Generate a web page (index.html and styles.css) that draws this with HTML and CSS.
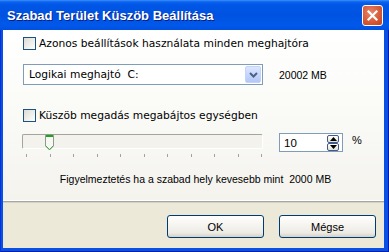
FILE: index.html
```html
<!DOCTYPE html>
<html>
<head>
<meta charset="utf-8">
<link rel="stylesheet" href="styles.css">
</head>
<body>
<div class="window">
  <div class="titlebar">
    <span class="title">Szabad Terület Küszöb Beállítása</span>
    <div class="close">
      <svg width="13" height="13" viewBox="0 0 13 13"><path d="M2.5 2.5 L10.5 10.5 M10.5 2.5 L2.5 10.5" stroke="#fff" stroke-width="2.2" stroke-linecap="square"/></svg>
    </div>
  </div>
  <div class="frame">
    <div class="client">
      <div class="panel">
        <div class="check first"><span class="box"></span><span class="label">Azonos beállítások használata minden meghajtóra</span></div>
        <div class="drive-row">
          <div class="combo">
            <span class="combo-text">Logikai meghajtó&nbsp; C:</span>
            <span class="drop"><svg width="9" height="6" viewBox="0 0 9 6"><path d="M1 1 L4.5 4.5 L8 1" fill="none" stroke="#4d6185" stroke-width="2"/></svg></span>
          </div>
          <span class="size">20002 MB</span>
        </div>
        <div class="check second"><span class="box"></span><span class="label">Küszöb megadás megabájtos egységben</span></div>
        <div class="slider-row">
          <div class="slider">
            <div class="track"></div>
            <svg class="thumb" width="9" height="17" viewBox="0 0 9 17">
              <path d="M0.5 2 Q0.5 0.5 2 0.5 H7 Q8.5 0.5 8.5 2 V12 L4.5 16 L0.5 12 Z" fill="#f7f7f4" stroke="#8e9a8c"/>
              <rect x="1" y="1" width="7" height="2" fill="#21a121"/>
              <path d="M1 12 L4.5 15.5 L8 12" fill="none" stroke="#3cb43c" stroke-width="1"/>
            </svg>
            <div class="ticks"><i></i><i></i><i></i><i></i><i></i><i></i><i></i><i></i><i></i><i></i><i></i></div>
          </div>
          <div class="spin">
            <span class="spin-val">10</span>
            <div class="spin-btns">
              <span class="sb"><svg width="7" height="4" viewBox="0 0 7 4"><path d="M0 4 L3.5 0 L7 4 Z" fill="#000"/></svg></span>
              <span class="sb"><svg width="7" height="4" viewBox="0 0 7 4"><path d="M0 0 L3.5 4 L7 0 Z" fill="#000"/></svg></span>
            </div>
          </div>
          <span class="pct">%</span>
        </div>
        <p class="warn">Figyelmeztetés ha a szabad hely kevesebb mint&nbsp; 2000 MB</p>
      </div>
      <div class="footer">
        <button class="btn">OK</button>
        <button class="btn">Mégse</button>
      </div>
    </div>
  </div>
</div>
</body>
</html>
```

FILE: styles.css
```css
* { box-sizing: border-box; margin: 0; padding: 0; }
html, body { width: 389px; height: 252px; overflow: hidden; }
body {
  font-family: "DejaVu Sans", "Liberation Sans", sans-serif;
  font-size: 10.7px;
  color: #000;
  background: #0a4fe2;
}
.window {
  width: 389px;
  height: 252px;
  display: flex;
  flex-direction: column;
}
.titlebar {
  height: 30px;
  flex: none;
  display: flex;
  align-items: center;
  padding-left: 7px;
  background: linear-gradient(to bottom, #3a8ff7 0px, #0a62f0 2px, #0056e6 5px, #0053e1 50%, #0058ea 85%, #0050de 100%);
}
.title {
  font-family: "Liberation Sans", sans-serif;
  font-weight: bold;
  font-size: 13px;
  color: #fff;
  text-shadow: 1px 1px 0 #0a1c7e;
  padding-top: 1px;
}
.close {
  margin-left: auto;
  margin-right: 6px;
  width: 21px;
  height: 21px;
  border: 1px solid #fff;
  border-radius: 3px;
  background: radial-gradient(circle at 40% 35%, #e9856a 0%, #d75b38 55%, #c24220 100%);
  display: flex;
  align-items: center;
  justify-content: center;
}
.frame {
  flex: 1;
  display: flex;
  padding: 0 5px 4px 3px;
  background: #0b50e4;
  box-shadow: inset 1px 0 0 #0831d9, inset -1px 0 0 #001ea0, inset 0 -1px 0 #001ea0;
}
.client {
  flex: 1;
  display: flex;
  flex-direction: column;
  background: #ece9d8;
}
.panel {
  height: 172px;
  flex: none;
  padding: 7px 0 0 20px;
  background: linear-gradient(to bottom, #ffffff 0%, #fbfbf8 40%, #f4f3ee 100%);
  border-bottom: 1px solid #a7a6a0;
  box-shadow: inset 0 -1px 0 #ffffff;
  position: relative;
}
.check {
  display: flex;
  align-items: center;
  height: 13px;
}
.box {
  width: 13px;
  height: 13px;
  border: 1px solid #1c5180;
  background: linear-gradient(135deg, #dcdcd7 0%, #f0f0ec 60%, #ffffff 100%);
  flex: none;
}
.label { margin-left: 3px; line-height: 13px; }
.drive-row {
  margin-top: 14px;
  display: flex;
  align-items: center;
}
.combo {
  width: 240px;
  height: 21px;
  border: 1px solid #7f9db9;
  background: #fff;
  display: flex;
  align-items: center;
  padding: 1px;
}
.combo-text { padding-left: 4px; flex: 1; }
.drop {
  width: 16px;
  height: 17px;
  border: 1px solid #c3d3fd;
  border-radius: 2px;
  background: linear-gradient(to bottom, #dce6fe 0%, #c6d6fc 50%, #b3c7f7 100%);
  display: flex;
  align-items: center;
  justify-content: center;
}
.size,
.spin-val,
.pct,
.warn,
.btn {
  font-family: "Liberation Sans", sans-serif;
  font-size: 10.5px;
}
.size { margin-left: 16px; }
.check.second { margin-top: 24px; }
.slider-row {
  margin-top: 11px;
  display: flex;
  align-items: flex-start;
}
.slider {
  position: relative;
  width: 241px;
  height: 24px;
  margin-left: -1px;
}
.track {
  margin-top: 1px;
  height: 15px;
  border: 1px solid #a5a49f;
  border-right-color: #fff;
  border-bottom-color: #fff;
  border-radius: 2px;
  background: #f3f2ec;
}
.thumb { position: absolute; left: 23px; top: 1px; }
.ticks {
  position: absolute;
  left: 4px;
  top: 21px;
  width: 236px;
  height: 3px;
  display: flex;
  justify-content: space-between;
}
.ticks i { width: 1px; height: 3px; background: #a3a29c; }
.spin {
  margin-left: 16px;
  width: 64px;
  height: 19px;
  border: 1px solid #7f9db9;
  background: #fff;
  display: flex;
  align-items: center;
  padding-right: 3px;
}
.spin-val { flex: 1; padding-left: 4px; font-size: 11.5px; }
.spin-btns { display: flex; flex-direction: column; }
.sb {
  width: 12px;
  height: 8px;
  border: 1px solid #3e5a8c;
  border-radius: 2px;
  background: linear-gradient(to bottom, #ffffff, #e4e2d6);
  display: flex;
  align-items: center;
  justify-content: center;
}
.pct { margin-left: 9px; margin-top: 1px; font-size: 11px; }
.warn {
  margin-top: 16px;
  margin-left: -20px;
  padding-left: 4px;
  text-align: center;
  line-height: 13px;
}
.footer {
  flex: 1;
  display: flex;
  justify-content: flex-end;
  align-items: flex-start;
  gap: 15px;
  padding: 12px 8px 0 0;
  border-top: 1px solid #d5d2c4;
}
.btn {
  width: 97px;
  height: 23px;
  border: 1px solid #003c74;
  border-radius: 3px;
  background: linear-gradient(to bottom, #ffffff 0%, #f6f5f0 40%, #ecebe4 80%, #d6d0c5 100%);
  color: #000;
  font-size: 11px;
}
```
